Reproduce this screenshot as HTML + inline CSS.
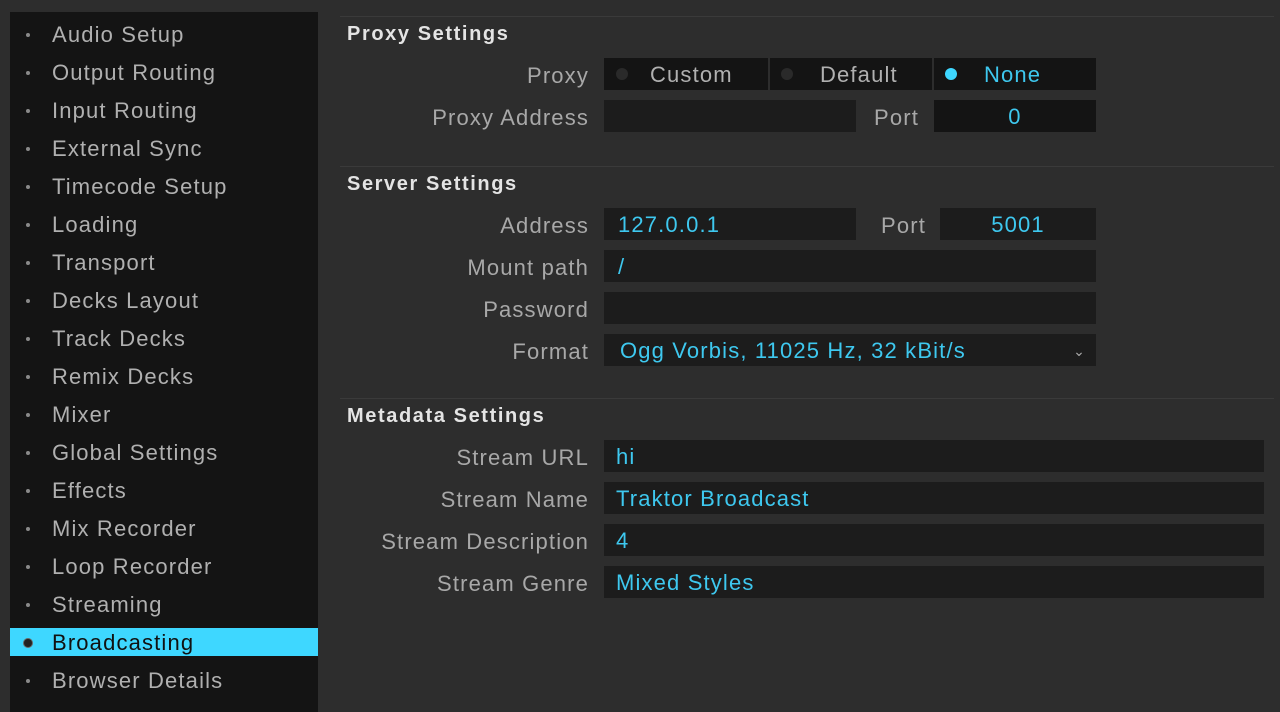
<!DOCTYPE html>
<html><head><style>
*{margin:0;padding:0;box-sizing:border-box}
body{width:1280px;height:704px;background:#2d2d2d;font-family:"Liberation Sans",sans-serif;font-size:22px;letter-spacing:1.15px;color:#a8a8a8;position:relative;overflow:hidden}
.side{position:absolute;left:10px;top:12px;width:308px;height:700px;background:#141414}
.it{position:absolute;left:0;width:308px;height:28px;line-height:30px;padding-left:42px;color:#b0b0b0}
.it:before{content:"";position:absolute;left:16px;top:13px;width:4px;height:4px;border-radius:50%;background:#8a8a8a}
.it.sel{background:#3ed7ff;color:#111}
.it.sel:before{left:13px;top:10px;width:8px;height:8px;background:#222;border:1px solid #666}
.hl{position:absolute;left:340px;width:934px;height:1px;background:#1a1a1a;border-bottom:1px solid #3a3a3a}
.h{position:absolute;left:347px;color:#e4e4e4;font-weight:bold;font-size:20px;letter-spacing:1.6px}
.lb{position:absolute;right:691px;color:#a8a8a8;text-align:right;white-space:nowrap}
.f{position:absolute;height:32px;background:#1c1c1c;color:#3ec8ef;line-height:34px;padding-left:14px;white-space:nowrap}
.c{text-align:center;padding-left:0}
.dot{position:absolute;top:10px;width:12px;height:12px;border-radius:50%;background:#2a2a2a}
</style></head><body>
<div class="side">
<div class="it" style="top:8px">Audio Setup</div>
<div class="it" style="top:46px">Output Routing</div>
<div class="it" style="top:84px">Input Routing</div>
<div class="it" style="top:122px">External Sync</div>
<div class="it" style="top:160px">Timecode Setup</div>
<div class="it" style="top:198px">Loading</div>
<div class="it" style="top:236px">Transport</div>
<div class="it" style="top:274px">Decks Layout</div>
<div class="it" style="top:312px">Track Decks</div>
<div class="it" style="top:350px">Remix Decks</div>
<div class="it" style="top:388px">Mixer</div>
<div class="it" style="top:426px">Global Settings</div>
<div class="it" style="top:464px">Effects</div>
<div class="it" style="top:502px">Mix Recorder</div>
<div class="it" style="top:540px">Loop Recorder</div>
<div class="it" style="top:578px">Streaming</div>
<div class="it sel" style="top:616px">Broadcasting</div>
<div class="it" style="top:654px">Browser Details</div>
</div>

<div class="hl" style="top:16px"></div>
<div class="h" style="top:23px">Proxy Settings</div>
<div class="lb" style="top:63px">Proxy</div>
<div class="f" style="left:604px;top:58px;width:164px;background:#141414;color:#b0b0b0;padding-left:46px"><span class="dot" style="left:12px"></span>Custom</div>
<div class="f" style="left:770px;top:58px;width:162px;background:#141414;color:#b0b0b0;padding-left:50px"><span class="dot" style="left:11px"></span>Default</div>
<div class="f" style="left:934px;top:58px;width:162px;background:#141414;padding-left:50px"><span class="dot" style="left:11px;background:#3ed7ff"></span>None</div>
<div class="lb" style="top:105px">Proxy Address</div>
<div class="f" style="left:604px;top:100px;width:252px"></div>
<div class="lb" style="top:105px;right:361px">Port</div>
<div class="f c" style="left:934px;top:100px;width:162px;background:#141414">0</div>

<div class="hl" style="top:166px"></div>
<div class="h" style="top:173px">Server Settings</div>
<div class="lb" style="top:213px">Address</div>
<div class="f" style="left:604px;top:208px;width:252px">127.0.0.1</div>
<div class="lb" style="top:213px;right:354px">Port</div>
<div class="f c" style="left:940px;top:208px;width:156px">5001</div>
<div class="lb" style="top:255px">Mount path</div>
<div class="f" style="left:604px;top:250px;width:492px">/</div>
<div class="lb" style="top:297px">Password</div>
<div class="f" style="left:604px;top:292px;width:492px"></div>
<div class="lb" style="top:339px">Format</div>
<div class="f" style="left:604px;top:334px;width:492px;padding-left:16px">Ogg Vorbis, 11025 Hz, 32 kBit/s<span style="position:absolute;right:10px;top:0;color:#aaa;font-size:14px">&#8964;</span></div>

<div class="hl" style="top:398px"></div>
<div class="h" style="top:405px">Metadata Settings</div>
<div class="lb" style="top:445px">Stream URL</div>
<div class="f" style="left:604px;top:440px;width:660px;padding-left:12px">hi</div>
<div class="lb" style="top:487px">Stream Name</div>
<div class="f" style="left:604px;top:482px;width:660px;padding-left:12px">Traktor Broadcast</div>
<div class="lb" style="top:529px">Stream Description</div>
<div class="f" style="left:604px;top:524px;width:660px;padding-left:12px">4</div>
<div class="lb" style="top:571px">Stream Genre</div>
<div class="f" style="left:604px;top:566px;width:660px;padding-left:12px">Mixed Styles</div>
</body></html>
